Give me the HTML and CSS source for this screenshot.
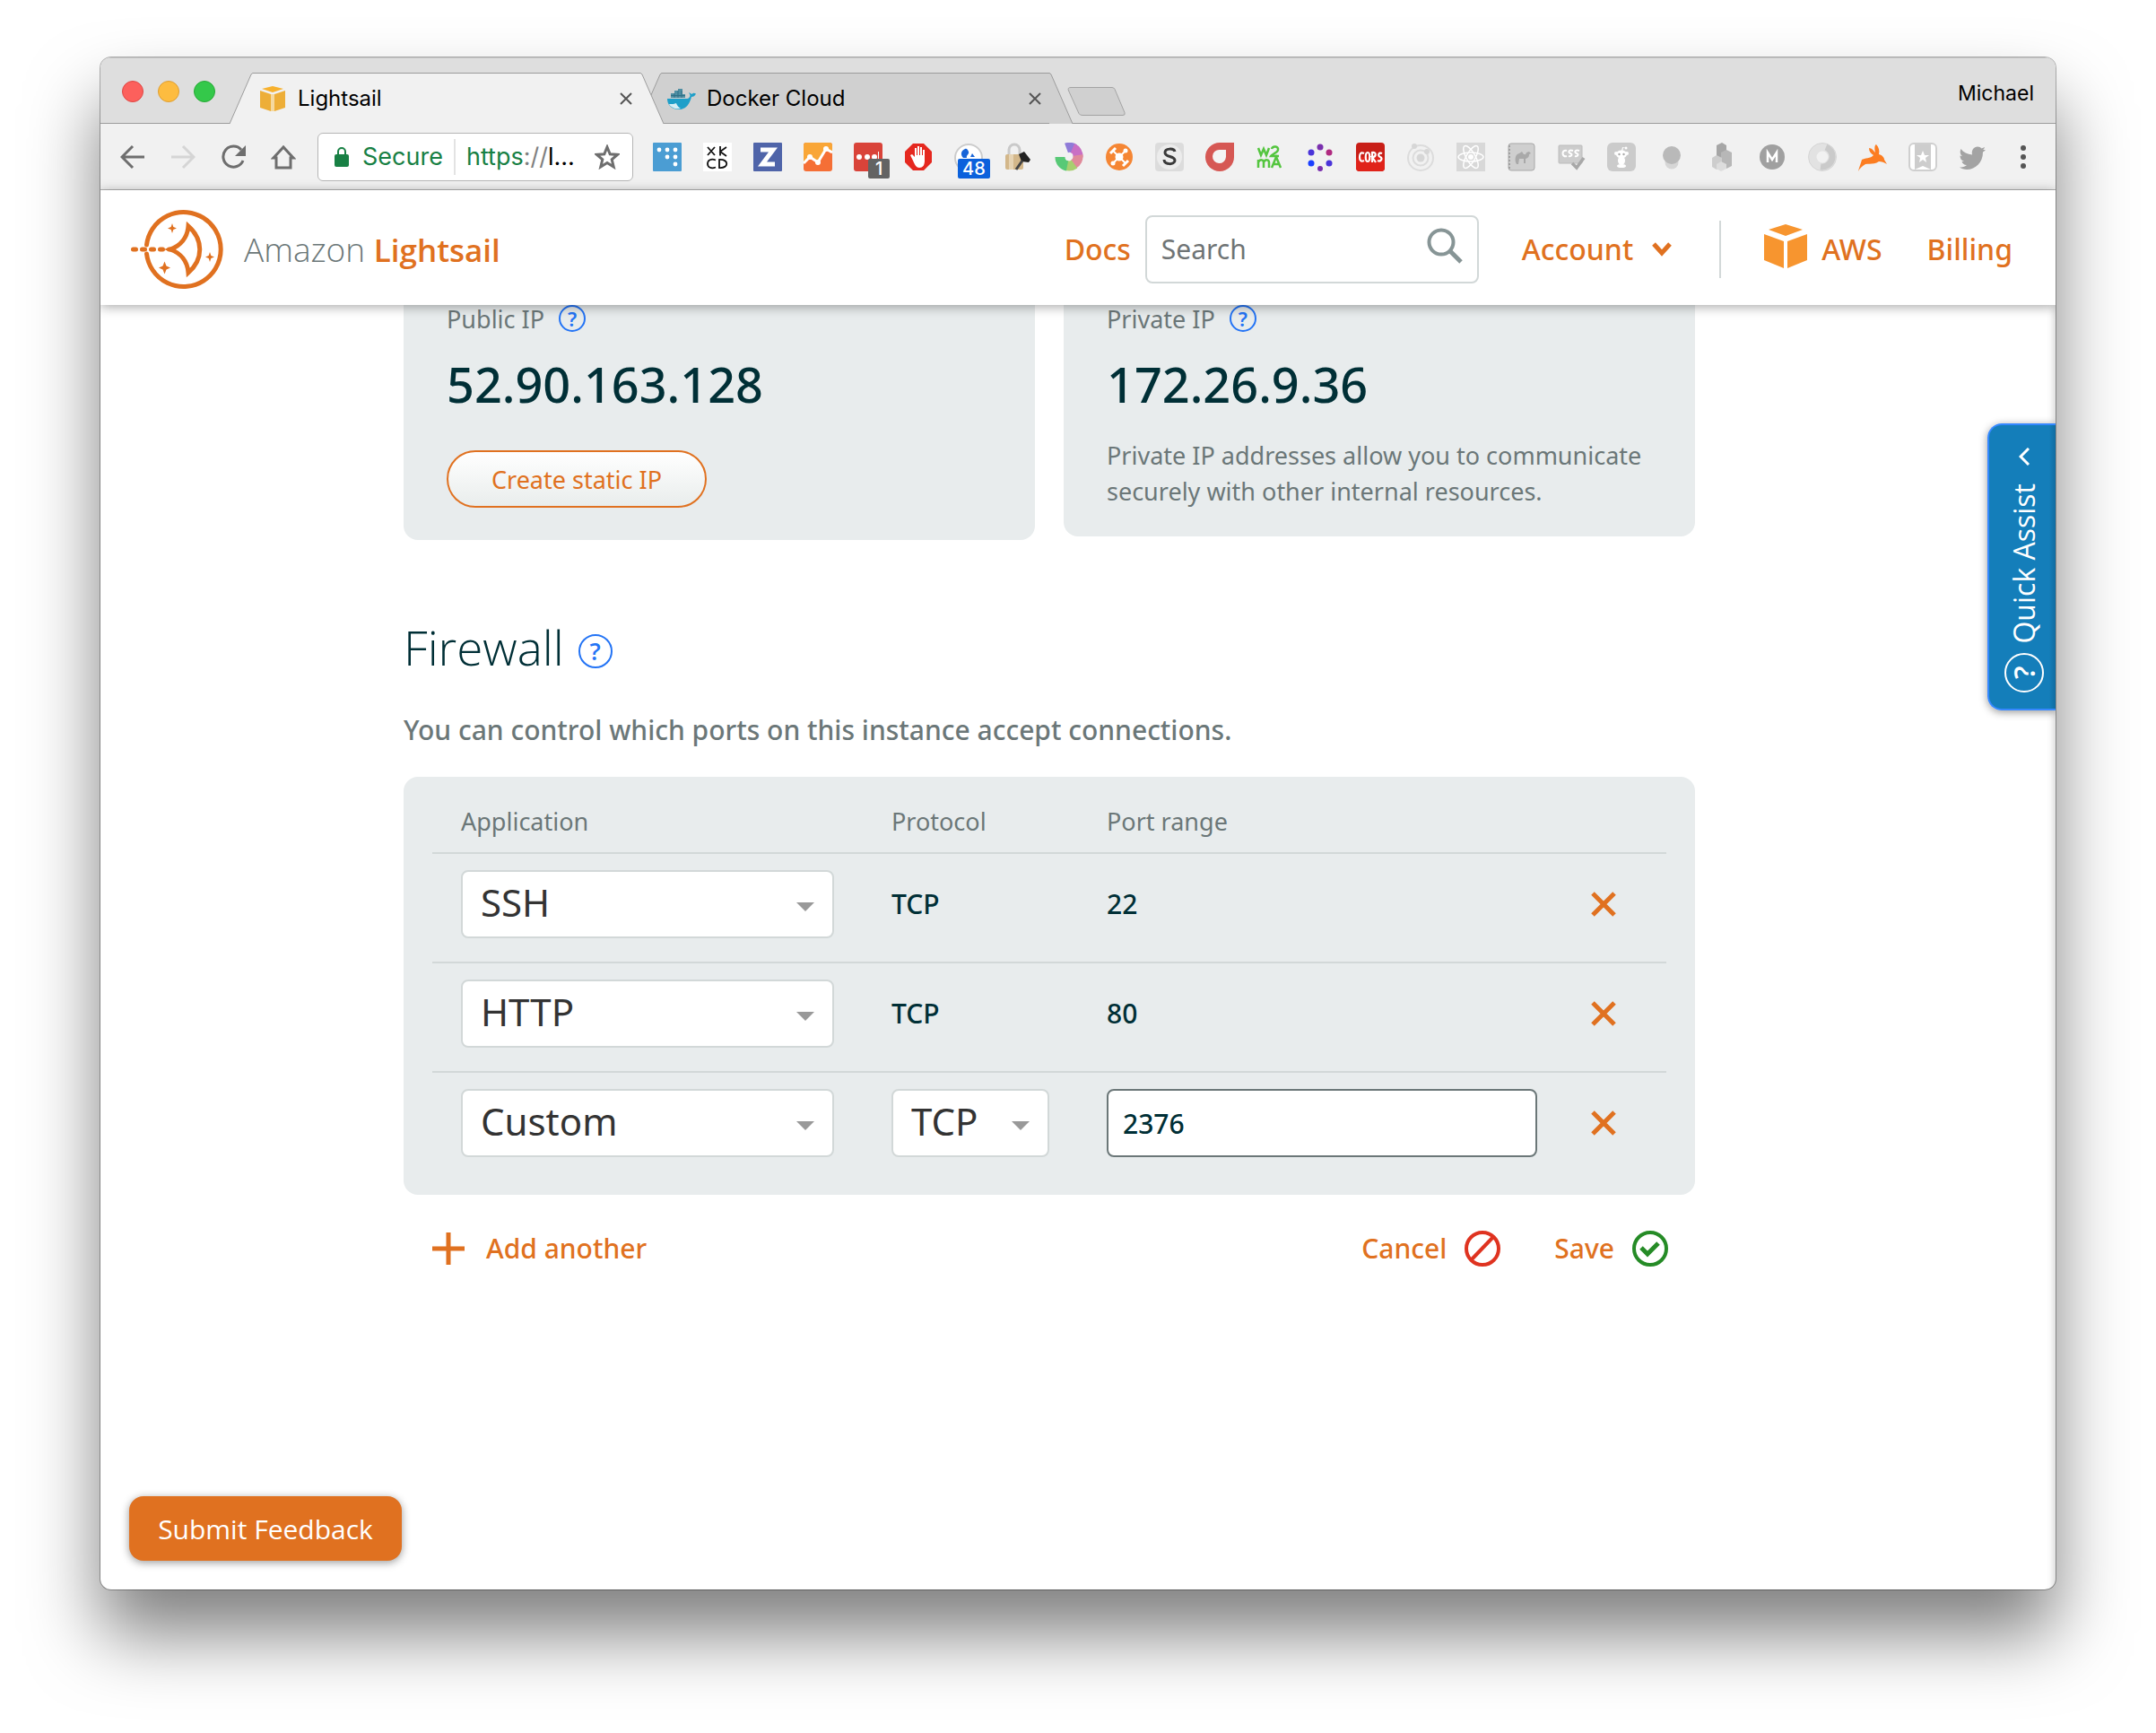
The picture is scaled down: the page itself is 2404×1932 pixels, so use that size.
FILE: index.html
```html
<!DOCTYPE html>
<html lang="en">
<head>
<meta charset="utf-8">
<meta name="viewport" content="width=device-width, initial-scale=1">
<title>Lightsail</title>
<link rel="stylesheet" href="styles.css">
</head>
<body>
<div class="window">
  <div class="tabstrip">
    <div class="lights">
      <button class="light light-close" aria-label="Close window"></button>
      <button class="light light-min" aria-label="Minimize window"></button>
      <button class="light light-max" aria-label="Zoom window"></button>
    </div>
    <div class="tab tab-active">
      <svg class="slant" viewBox="0 0 26 57"><path class="fill" d="M0 57L24 2Q25 0 26 0V57z"/><path class="edge" d="M0 57L24 2Q25 .5 26 .5"/></svg>
      <div class="tab-body">
        <svg class="favicon" viewBox="0 0 28 28"><path fill="#f7b12d" d="M2 3L14 0l12 3-12 4z"/><path fill="#edae38" d="M0 5l12 4v19L0 24zM16 9l12-4v19l-12 4z"/><path fill="#f5d9a0" d="M12 9h4v19h-4z"/></svg>
        <span class="tab-title">Lightsail</span>
        <button class="tab-close" aria-label="Close tab"><svg viewBox="0 0 14 14"><path d="M1 1l12 12M13 1L1 13"/></svg></button>
      </div>
      <svg class="slant" viewBox="0 0 26 57"><path class="fill" d="M26 57L2 2Q1 0 0 0V57z"/><path class="edge" d="M26 57L2 2Q1 .5 0 .5"/></svg>
    </div>
    <div class="tab tab-back">
      <svg class="slant" viewBox="0 0 26 57"><path class="fill" d="M0 57L24 2Q25 0 26 0V57z"/><path class="edge" d="M0 57L24 2Q25 .5 26 .5"/></svg>
      <div class="tab-body">
        <svg class="favicon favicon-wide" viewBox="0 0 32 24"><path fill="#4f8fa3" d="M4 11V6h4V3h4V1h5v6h3v4z"/><path stroke="#2f6f86" d="M8 6v5M12 3v8M16 3v8M4 8.500h16"/><path fill="#1f9fc9" d="M0 12h22c2 0 3.500-2 3.500-4L24 5l3.500 2c1-1.500 2.500-1.500 4.500-.5-1 2.500-3 3.500-5 3.500-2 8-6 14-14 14C4 24 0 18 0 12z"/><path fill="#d8eef5" d="M2 18c4 0 6 0 8-1 1 3 3 5 5 6-6 1-11-1-13-5z"/></svg>
        <span class="tab-title">Docker Cloud</span>
        <button class="tab-close" aria-label="Close tab"><svg viewBox="0 0 14 14"><path d="M1 1l12 12M13 1L1 13"/></svg></button>
      </div>
      <svg class="slant" viewBox="0 0 26 57"><path class="fill" d="M26 57L2 2Q1 0 0 0V57z"/><path class="edge" d="M26 57L2 2Q1 .5 0 .5"/></svg>
    </div>
    <button class="newtab" aria-label="New tab"><svg viewBox="0 0 66 32"><path d="M4 .5h46q2 0 3 2l11 26q1 3-2 3H17q-3 0-4-2L1.500 4Q0 .5 4 .5z"/></svg></button>
    <span class="profile">Michael</span>
  </div>

  <div class="toolbar">
    <div class="nav-buttons">
      <button aria-label="Back"><svg class="line" viewBox="0 0 28 28"><path d="M27 14H3M14 2L2 14l12 12"/></svg></button>
      <button aria-label="Forward"><svg class="line faint" viewBox="0 0 28 28"><path d="M1 14h24M14 2l12 12-12 12"/></svg></button>
      <button aria-label="Reload"><svg class="line" viewBox="0 0 28 28"><path d="M25 18a11.500 11.500 0 1 1-2-12"/><path fill="#6e6e6e" stroke="none" d="M28 1v12H16z"/></svg></button>
      <button aria-label="Home"><svg class="line" viewBox="0 0 28 28"><path d="M14 3L3 15h3v11h16V15h3z"/></svg></button>
    </div>
    <div class="address">
      <svg class="lock" viewBox="0 0 16 22"><rect y="8" width="16" height="14" rx="2" fill="#188044"/><path d="M4 9V5a4 4 0 0 1 8 0v4" fill="none" stroke="#188044" stroke-width="2"/></svg>
      <span class="secure">Secure</span>
      <span class="url"><span class="scheme">https</span><span class="slashes">://</span>l...</span>
      <button aria-label="Bookmark"><svg class="line star" viewBox="0 0 28 28"><path d="M14 3l3.200 7.800 8.300.6-6.300 5.400 2 8.200-7.200-4.500L6.800 25l2-8.200-6.300-5.400 8.300-.6z"/></svg></button>
    </div>
    <div class="extensions">
      <svg viewBox="0 0 32 32"><rect width="32" height="32" rx="1" fill="#4b9dd3"/><g fill="#fff"><circle cx="7" cy="8" r="2.400"/><circle cx="16" cy="8" r="2.400"/><circle cx="25" cy="8" r="2.400"/><circle cx="16" cy="16" r="2.400"/><circle cx="25" cy="16" r="2.400"/><circle cx="25" cy="24" r="2.400"/></g></svg>
      <svg viewBox="0 0 32 32"><rect width="32" height="32" fill="#fff"/><path fill="none" stroke="#111" stroke-width="1.800" d="M5 5l8 9M13 5l-8 9M19 4v10.500M26 5l-7 5 7 5M14 19.500c-5-2-9 0-9 4s4 6 9 4M18 19v9c11 1 11-10 0-9z"/></svg>
      <svg viewBox="0 0 32 32"><rect width="32" height="32" rx="1" fill="#4f64a9"/><path fill="none" stroke="#fff" stroke-width="5" d="M8 8h14L10 24h14"/></svg>
      <svg viewBox="0 0 32 32"><rect width="32" height="32" rx="3" fill="#f56f36"/><path fill="#f9a637" d="M0 23V3q0-3 3-3h26q3 0 3 3v8l-6-4-10 16-9-7z"/><path fill="none" stroke="#fff" stroke-width="3" d="M0 23l7-7 9 6 9-15 7 4"/><g fill="#fff"><circle cx="7" cy="16" r="3"/><circle cx="16" cy="22" r="3"/><circle cx="25" cy="7" r="3"/></g></svg>
      <span class="ext-badged"><svg viewBox="0 0 32 32"><rect width="32" height="32" rx="3" fill="#d94339"/><g fill="#fff"><circle cx="6" cy="16" r="3"/><circle cx="15" cy="16" r="3"/><circle cx="23" cy="16" r="3"/><path d="M27 10h1v8h-1z"/></g></svg><b class="badge badge-grey">1</b></span>
      <svg viewBox="0 0 32 32"><path fill="#e5281f" d="M10 1h12l9 9v12l-9 9H10l-9-9V10z"/><path fill="#fff" d="M10 20l-3-6 2-1 3 3V6h2v8h1V4h2v10h1V5h2v9h1V8h2v12c0 5-2 8-6 8-3 0-5-3-7-8z"/></svg>
      <span class="ext-badged"><svg viewBox="0 0 32 32"><circle cx="16" cy="17" r="15" fill="#fff" stroke="#ccc" stroke-width="2"/><path fill="#1764d8" d="M12 7c-5 2-5 7-2 10h4c-1-3 3-4 2-7-1-2-2-4-4-3zM20 12l3 4h-5z"/></svg><b class="badge badge-blue">48</b></span>
      <svg viewBox="0 0 32 32"><path d="M5 14V8a6 6 0 0 1 12 0v6" fill="none" stroke="#c9c9c9" stroke-width="3"/><rect x="1" y="13" width="20" height="17" rx="2" fill="#d3b78a"/><path fill="#e6d3b3" d="M5 13h5v17H5z"/><path fill="#222" d="M16 13l6-3 7 9-2 3-8-1z"/><path stroke="#444" stroke-width="3" d="M20 20L13 30"/></svg>
      <svg viewBox="0 0 32 32"><g fill="none" stroke-width="11"><path stroke="#8f7bd8" d="M13 6a10 10 0 0 1 9 1"/><path stroke="#c96fc4" d="M20 6a10 10 0 0 1 6 10"/><path stroke="#e08a9a" d="M26 14a10 10 0 0 1-5 10"/><path stroke="#a8cf6f" d="M22 24a10 10 0 0 1-10 1"/><path stroke="#58c976" d="M14 26a10 10 0 0 1-8-10"/></g></svg>
      <svg viewBox="0 0 32 32"><circle cx="16" cy="16" r="15" fill="#f58634"/><g stroke="#fff" stroke-width="3" fill="#fff"><circle cx="16" cy="16" r="3"/><path d="M9 9l14 14M23 9L9 23" stroke-width="2"/><path d="M6 12l6-6M20 26l6-6"/></g><g fill="#fff"><circle cx="23" cy="9" r="2.500"/><circle cx="9" cy="23" r="2.500"/></g></svg>
      <svg viewBox="0 0 32 32"><rect width="32" height="32" rx="4" fill="#dcdcdc"/><circle cx="16" cy="16" r="14" fill="#ececec"/><path fill="none" stroke="#3a3a3a" stroke-width="3" d="M22 10c-1-4-11-4-11 1 0 6 11 3 11 9 0 5-12 5-12-1"/></svg>
      <svg viewBox="0 0 32 32"><path fill="#d65854" d="M32 0v16a16 16 0 1 1-16-16z"/><path fill="#f4f4f4" d="M23 8v8a7.500 7.500 0 1 1-7-8z"/></svg>
      <svg viewBox="0 0 32 32"><path fill="none" stroke="#54c53f" stroke-width="2.500" d="M3 6l3 8 3-7 3 7 3-8M18 7c1-4 8-3 7 1 0 3-7 5-8 7h9M3 28v-9M3 22c2-4 6-3 6 0v6M9 22c2-4 6-3 6 0v6M18 28l5-12 5 12M20 24h7"/></svg>
      <svg viewBox="0 0 32 32"><g fill="#4a34d9"><circle cx="6" cy="11" r="3.500"/><circle cx="26" cy="23" r="3.500"/></g><g fill="#7a2fae"><circle cx="16" cy="5" r="3.500"/><circle cx="16" cy="29" r="3"/></g><circle cx="26" cy="11" r="3.500" fill="#b02a80"/><circle cx="6" cy="23" r="3.500" fill="#1a3fff"/></svg>
      <svg viewBox="0 0 32 32"><rect width="32" height="32" rx="4" fill="#c81e17"/><rect y="16" width="32" height="16" rx="4" fill="#e0231a"/><path fill="none" stroke="#fff" stroke-width="2.200" d="M9 12c-4-2-5 1-5 4s1 6 5 4M13 11c-3 0-3 10 0 10s3-10 0-10zM18 22V11c5-1 5 5 0 5l4 6M29 12c-4-2-5 3-2 4s1 6-3 4"/></svg>
      <svg viewBox="0 0 32 32"><g fill="none" stroke="#dcdcdc" stroke-width="2"><circle cx="16" cy="17" r="14"/><circle cx="16" cy="17" r="8.500"/></g><g fill="#d6d6d6"><circle cx="16" cy="17" r="4.500"/><circle cx="9" cy="4" r="3"/><circle cx="23" cy="10" r="3"/></g></svg>
      <svg viewBox="0 0 32 32"><rect width="32" height="32" fill="#d8d8d8"/><g fill="none" stroke="#fff" stroke-width="1.500"><ellipse cx="16" cy="16" rx="14" ry="5"/><ellipse cx="16" cy="16" rx="14" ry="5" transform="rotate(60 16 16)"/><ellipse cx="16" cy="16" rx="14" ry="5" transform="rotate(120 16 16)"/></g><circle cx="16" cy="16" r="3" fill="#fff"/></svg>
      <svg viewBox="0 0 32 32"><rect x="2" y="1" width="29" height="30" rx="3" fill="#cfcfcf" stroke="#a8a8a8"/><path stroke="#a0a0a0" stroke-width="2" stroke-dasharray="2 2" d="M3 3v26"/><path fill="#a9a9a9" d="M10 22c-1-5 0-9 4-10l3-2 2 3c2 0 2 1 3-2l3-1 2 2-2 1c0 3-1 4-4 5v5h-2v-5h-5l-1 6h-2z"/></svg>
      <svg viewBox="0 0 32 32"><rect x="2" y="3" width="26" height="20" rx="1" fill="#ccc" stroke="#bcbcbc"/><path fill="none" stroke="#fff" stroke-width="2" d="M11 9c-6-2-6 8 0 6M18 9c-5-2-6 2-3 3s1 4-2 3M25 9c-5-2-6 2-3 3s1 4-2 3"/><path fill="none" stroke="#a8a8a8" stroke-width="3.500" d="M17 23l5 5 8-11"/></svg>
      <svg viewBox="0 0 32 32"><rect width="32" height="32" rx="6" fill="#cbcbcb"/><g fill="#fff"><ellipse cx="16" cy="13" rx="6" ry="4.500"/><circle cx="10" cy="12" r="2"/><circle cx="22" cy="12" r="2"/><ellipse cx="16" cy="20" rx="4" ry="5"/><ellipse cx="16" cy="26" rx="5" ry="2"/><circle cx="21" cy="6" r="1.500"/><path d="M16 9l1-4 4 1-3 0-1 4z"/></g><g fill="#aaa"><circle cx="13.500" cy="13" r="1.200"/><circle cx="18.500" cy="13" r="1.200"/></g></svg>
      <svg viewBox="0 0 32 32"><circle cx="16" cy="22" r="7.500" fill="#d6d6d6"/><circle cx="16" cy="14" r="10" fill="#b9b9b9"/></svg>
      <svg viewBox="0 0 32 32"><path fill="#a6a6a6" d="M10 3l6-3 5 3v20H10z"/><path fill="#b7b7b7" d="M15 11l6-3 6 3v15l-6 3-6-3z"/><path fill="#cdcdcd" d="M5 17l5-3 6 3v10l-6 3-5-3z"/><path fill="#ddd" d="M10 24l5-3 6 3v5l-6 3-5-3z"/></svg>
      <svg viewBox="0 0 32 32"><circle cx="16" cy="16" r="14" fill="#a0a0a0"/><path fill="none" stroke="#fff" stroke-width="2.500" d="M11 22V11l5 8 5-8v11"/></svg>
      <svg viewBox="0 0 32 32"><circle cx="16" cy="16" r="11" fill="none" stroke="#e2e2e2" stroke-width="9"/><path fill="none" stroke="#cacaca" stroke-width="7" d="M20 5a11.500 11.500 0 0 1-6 22"/><circle cx="16" cy="16" r="15.500" fill="none" stroke="#d5d5d5"/></svg>
      <svg viewBox="0 0 32 32"><path fill="#fc7d21" d="M0 32c1-5 3-9 4-13 3-2 10-1 13-5-3-2-5-4-5-8 3 0 5 3 7 5-1-4-1-8 1-9 3 3 4 7 3 11 4 1 6 4 6 6l3 5c-3-2-6-3-9-3-5 4-11 2-15 3-3 2-6 4-8 8z"/></svg>
      <svg viewBox="0 0 32 32"><rect x="1" y="1" width="30" height="30" rx="5" fill="#fff" stroke="#cfcfcf" stroke-width="2"/><path fill="#cdcdcd" d="M7 2h18v28l-9-4-9 4z"/><path fill="#fff" d="M16 9l2 5h5l-4 3 1 5-4-3-4 3 1-5-4-3h5z"/></svg>
      <svg viewBox="0 0 32 32"><path fill="#a3a3a3" d="M30 8c-1 1-2 2-3 2.500C27 22 19 30 9 30c-3 0-6-1-8-2.500 3 0 6-.5 8-2.500-3 0-5-2-5.500-4h2.500C3 20 1.500 18 1.500 14.500l2.500.8C1.500 13 1 10 2.500 7c3 4 7 6 12.500 6.500C14 8 17 4.500 21 4.500c2 0 3.500.7 4.500 2L29 5c-.5 1.500-1 2.500-2 3z"/></svg>
      <button aria-label="Menu"><svg viewBox="0 0 32 32"><g fill="#555"><circle cx="16" cy="6" r="3"/><circle cx="16" cy="16" r="3"/><circle cx="16" cy="26" r="3"/></g></svg></button>
    </div>
  </div>

  <div class="page">
    <header class="site-header">
      <a class="brand" href="#">
        <svg class="brand-mark" viewBox="0 0 104 92"><g fill="none" stroke="#e07120" stroke-width="5"><path d="M17.500 41a41.500 41.500 0 1 1 0 10" stroke-linecap="round"/><path d="M44 46C55 42 63 33 64 20c17 15 17 37 0 52-1-13-9-22-20-26z"/><path stroke-linecap="round" stroke-dasharray="3 7" d="M2.500 46H44"/></g><g fill="#e07120"><path d="M46 17l1.300 4 3.700 1.500-3.700 1.500L46 28l-1.300-4-3.700-1.500 3.700-1.500z"/><path d="M88 49l1.300 4 3.700 1.500-3.700 1.500L88 60l-1.300-4-3.700-1.500 3.700-1.500z"/><path d="M37.500 59.500l2 5 4.500 2-4.500 2-2 5-2-5-4.500-2 4.500-2z"/></g></svg>
        <span class="brand-name">Amazon <strong>Lightsail</strong></span>
      </a>
      <nav class="site-nav">
        <a class="nav-docs" href="#">Docs</a>
        <label class="search">
          <input type="search" placeholder="Search" aria-label="Search">
          <svg viewBox="0 0 40 40"><circle cx="16" cy="16" r="13.500" fill="none" stroke="#879596" stroke-width="4"/><path d="M26 26l12 12" stroke="#879596" stroke-width="5"/></svg>
        </label>
        <button class="nav-account">Account <svg viewBox="0 0 24 16"><path d="M3 2l9 10 9-10" fill="none" stroke="#e07120" stroke-width="5"/></svg></button>
        <span class="nav-divider"></span>
        <a class="nav-aws" href="#"><svg viewBox="0 0 48 50"><path fill="#f7952f" d="M5 6l19-6 19 6-19 7zM0 11l22 8v30L0 40zM26 19l22-8v29l-22 9z"/></svg>AWS</a>
        <a class="nav-billing" href="#">Billing</a>
      </nav>
    </header>

    <main class="content">
      <div class="cards">
        <section class="card card-public">
          <h2 class="card-label">Public IP <button class="help" aria-label="About public IP">?</button></h2>
          <p class="ip">52.90.163.128</p>
          <button class="btn-outline">Create static IP</button>
        </section>
        <section class="card card-private">
          <h2 class="card-label">Private IP <button class="help" aria-label="About private IP">?</button></h2>
          <p class="ip">172.26.9.36</p>
          <p class="card-note">Private IP addresses allow you to communicate securely with other internal resources.</p>
        </section>
      </div>

      <h1 class="section-title">Firewall <button class="help help-large" aria-label="About the firewall">?</button></h1>
      <p class="intro">You can control which ports on this instance accept connections.</p>

      <div class="panel">
        <table class="rules">
          <colgroup><col class="col-app"><col class="col-proto"><col class="col-port"><col></colgroup>
          <thead>
            <tr><th scope="col">Application</th><th scope="col">Protocol</th><th scope="col">Port range</th><td></td></tr>
          </thead>
          <tbody>
            <tr>
              <td><span class="select"><select aria-label="Application, rule 1"><option>SSH</option></select></span></td>
              <td>TCP</td><td>22</td>
              <td><button class="remove" aria-label="Remove rule 1"><svg viewBox="0 0 28 28"><path d="M2 2l24 24M26 2L2 26"/></svg></button></td>
            </tr>
            <tr>
              <td><span class="select"><select aria-label="Application, rule 2"><option>HTTP</option></select></span></td>
              <td>TCP</td><td>80</td>
              <td><button class="remove" aria-label="Remove rule 2"><svg viewBox="0 0 28 28"><path d="M2 2l24 24M26 2L2 26"/></svg></button></td>
            </tr>
            <tr>
              <td><span class="select"><select aria-label="Application, rule 3"><option>Custom</option></select></span></td>
              <td><span class="select"><select aria-label="Protocol, rule 3"><option>TCP</option></select></span></td>
              <td><input class="port" type="text" value="2376" aria-label="Port range, rule 3"></td>
              <td><button class="remove" aria-label="Remove rule 3"><svg viewBox="0 0 28 28"><path d="M2 2l24 24M26 2L2 26"/></svg></button></td>
            </tr>
          </tbody>
        </table>
      </div>

      <div class="actions">
        <button class="action action-add"><svg viewBox="0 0 36 36"><path d="M18 0v36M0 18h36" stroke="#e07120" stroke-width="5"/></svg>Add another</button>
        <button class="action action-cancel">Cancel<svg viewBox="0 0 40 40"><g fill="none" stroke="#df3320" stroke-width="4"><circle cx="20" cy="20" r="18"/><path d="M32 7L8 32"/></g></svg></button>
        <button class="action action-save">Save<svg viewBox="0 0 40 40"><g fill="none" stroke="#258b26"><circle cx="20" cy="20" r="18" stroke-width="4"/><path d="M10 19l7 7 12-12" stroke-width="5"/></g></svg></button>
      </div>
    </main>

    <button class="assist">
      <svg class="assist-arrow" viewBox="0 0 12 20"><path d="M11 1L2 10l9 9"/></svg>
      <span class="assist-text">Quick Assist</span>
      <span class="assist-help">?</span>
    </button>
    <button class="feedback">Submit Feedback</button>
  </div>
</div>
</body>
</html>
```
FILE: styles.css
```css
:root {
  --orange: #e07120;
  --ink: #002f36;
  --muted: #6b7778;
  --panel: #e8eced;
  --rule: #d2d8d8;
  --ui: Inter, "Liberation Sans", sans-serif;
  --text: "Noto Sans", "Open Sans", sans-serif;
  --light: "Open Sans", "Noto Sans", sans-serif;
}

* { box-sizing: border-box; }

body {
  margin: 0;
  padding: 64px 112px 160px;
  min-height: 100vh;
  display: flex;
  background: #fff;
  font-family: var(--text);
  color: var(--ink);
}

h1, h2, p { margin: 0; font-weight: 400; }
button { margin: 0; padding: 0; border: 0; background: none; font: inherit; color: inherit; cursor: pointer; }
a { color: var(--orange); text-decoration: none; }
svg { display: block; flex: none; }

.window {
  flex: 1;
  min-width: 0;
  display: flex;
  flex-direction: column;
  border-radius: 12px;
  overflow: hidden;
  background: #fff;
  box-shadow: 0 0 0 1px rgba(0, 0, 0, .3), 0 50px 80px rgba(0, 0, 0, .5);
}

/* Tab strip */
.tabstrip {
  display: flex;
  height: 74px;
  padding: 0 24px;
  background: #dedede;
  box-shadow: inset 0 -1px #9c9c9c, inset 0 1px #c4c4c4;
  font: 24px/28px var(--ui);
  color: #000;
}
.lights { display: flex; align-items: center; gap: 16px; margin-right: 16px; padding-top: 2px; }
.light { width: 24px; height: 24px; border-radius: 50%; }
.light-close { background: #fc605c; border: 1px solid #df4744; }
.light-min { background: #fdbc40; border: 1px solid #de9f34; }
.light-max { background: #34c84a; border: 1px solid #27aa35; }

.tab { display: flex; flex: 0 1 484px; height: 57px; margin-top: 17px; min-width: 0; }
.slant { width: 26px; height: 57px; }
.slant .fill { fill: var(--tab); }
.slant .edge { fill: none; stroke: #9c9c9c; }
.tab-body {
  flex: 1;
  min-width: 0;
  display: flex;
  align-items: center;
  gap: 14px;
  padding: 0 9px 0 8px;
  background: var(--tab);
  border-top: 1px solid #9c9c9c;
}
.tab-active { --tab: #f1f1f1; position: relative; z-index: 1; }
.tab-back { --tab: #d0d0d0; margin-left: -28px; box-shadow: inset 0 -1px #9c9c9c; }
.tab-back .tab-body { border-bottom: 1px solid #9c9c9c; padding-left: 6px; gap: 12px; }
.favicon { width: 28px; height: 28px; }
.favicon-wide { width: 32px; height: 24px; }
.tab-title { flex: 1; white-space: nowrap; overflow: hidden; }
.tab-close svg { width: 14px; height: 14px; fill: none; stroke: #555; stroke-width: 2; }
.newtab { align-self: flex-start; height: 32px; margin: 33px 0 0 -6px; }
.newtab svg { width: 66px; height: 32px; fill: #d0d0d0; stroke: #a3a3a3; }
.profile { margin: 26px 0 0 auto; font-size: 23px; }

/* Toolbar */
.toolbar {
  display: flex;
  align-items: center;
  height: 74px;
  padding: 0 20px 0 22px;
  background: #f1f1f1;
  border-bottom: 1px solid #b3b3b3;
}
.nav-buttons { display: flex; gap: 28px; margin-right: 24px; }
.nav-buttons svg { width: 28px; height: 28px; }
.line { fill: none; stroke: #6e6e6e; stroke-width: 3; }
.faint { stroke: #d5d5d5; }
.address {
  flex: 1;
  min-width: 0;
  height: 54px;
  display: flex;
  align-items: center;
  padding: 0 14px 0 18px;
  background: #fff;
  border: 1px solid #b6b6b6;
  border-radius: 6px;
  font: 27px/40px var(--ui);
}
.lock { width: 16px; height: 22px; margin-right: 15px; }
.secure { color: #188044; padding-right: 12px; border-right: 2px solid #e3e3e3; }
.url { flex: 1; padding-left: 12px; color: #000; }
.scheme { color: #188044; }
.slashes { color: #808080; }
.star { width: 28px; height: 28px; }

.extensions { display: flex; gap: 24px; margin-left: 22px; }
.extensions svg { width: 32px; height: 32px; }
.ext-badged { position: relative; }
.badge {
  position: absolute;
  left: 16px;
  top: 18px;
  padding: 0 6px;
  border-radius: 2px;
  color: #fff;
  font: 500 20px/22px var(--ui);
}
.badge-grey { background: #636363; padding: 0 8px; }
.badge-blue { background: #0b61dc; left: 4px; padding: 0 5px; }

/* Lightsail page */
.page { flex: 1; display: flex; flex-direction: column; position: relative; box-shadow: inset -8px 0 8px -6px rgba(0, 0, 0, .18); }
.site-header {
  position: relative;
  z-index: 1;
  display: flex;
  align-items: center;
  justify-content: space-between;
  height: 128px;
  padding: 4px 48px 0 34px;
  background: #fff;
  box-shadow: 0 2px 12px rgba(0, 0, 0, .35);
  font-size: 32px;
  line-height: 48px;
}
.brand { display: flex; align-items: center; gap: 22px; color: var(--muted); font-family: var(--light); font-size: 37px; font-weight: 300; }
.brand-mark { width: 104px; height: 92px; }
.brand-name { white-space: nowrap; }
.brand strong { color: var(--orange); font-size: 35px; font-weight: 600; }
.site-nav { display: flex; align-items: center; font-weight: 500; color: var(--orange); }
.search {
  display: flex;
  align-items: center;
  width: 372px;
  height: 76px;
  margin: 0 48px 0 16px;
  padding: 0 16px;
  border: 2px solid var(--rule);
  border-radius: 8px;
}
.search input {
  flex: 1;
  min-width: 0;
  padding: 0;
  border: 0;
  outline: 0;
  background: none;
  font: 400 30px/40px var(--text);
}
.search input::placeholder { color: #6f7475; opacity: 1; }
.search svg { width: 40px; height: 40px; margin-bottom: 8px; }
.nav-account { display: flex; align-items: center; gap: 20px; }
.nav-account svg { width: 24px; height: 16px; }
.nav-divider { width: 2px; height: 64px; margin: 0 48px 0 52px; background: var(--rule); }
.nav-aws { display: flex; align-items: center; gap: 16px; margin-right: 50px; }
.nav-aws svg { width: 48px; height: 50px; margin-bottom: 6px; }

.content { width: 100%; max-width: 1504px; margin: 0 auto; padding-right: 64px; }

.cards { display: grid; grid-template-columns: 1fr 1fr; gap: 32px; align-items: start; }
.card { padding: 0 48px; background: var(--panel); border-radius: 0 0 16px 16px; }
.card-public { padding-bottom: 36px; }
.card-private { padding-bottom: 30px; }
.card-label { display: flex; gap: 16px; color: var(--muted); font-size: 27px; line-height: 32px; }
.help {
  width: 30px;
  height: 30px;
  border: 2px solid #2474f5;
  border-radius: 50%;
  color: #2474f5;
  font-size: 22px;
  font-weight: 600;
  line-height: 26px;
}
.ip { margin-top: 20px; font-size: 54px; font-weight: 500; line-height: 72px; }
.btn-outline {
  width: 290px;
  height: 64px;
  margin-top: 38px;
  border: 2px solid var(--orange);
  border-radius: 32px;
  background: linear-gradient(#fff, #e9edec);
  color: var(--orange);
  font-size: 27px;
}
.card-note { margin-top: 24px; color: var(--muted); font-size: 27px; line-height: 40px; }

.section-title {
  display: flex;
  align-items: center;
  gap: 16px;
  margin-top: 84px;
  font-family: var(--light);
  font-size: 53px;
  font-weight: 300;
  line-height: 72px;
}
.help-large { width: 38px; height: 38px; margin-top: 8px; font-size: 27px; line-height: 34px; }
.intro { margin-top: 36px; color: var(--muted); font-size: 30px; font-weight: 500; line-height: 40px; }

.panel { margin-top: 32px; padding: 0 32px 16px; background: var(--panel); border-radius: 16px; }
.rules { width: 100%; table-layout: fixed; border-collapse: separate; border-spacing: 0; font-size: 30px; line-height: 40px; }
.col-app { width: 480px; }
.col-proto { width: 240px; }
.col-port { width: 544px; }
.rules th { padding: 32px 32px 16px; color: var(--muted); font-size: 27px; font-weight: 400; line-height: 36px; text-align: left; }
.rules tbody td { height: 122px; padding: 18px 32px 26px; border-top: 2px solid var(--rule); font-weight: 500; }
.rules tbody td:last-child { padding-left: 28px; padding-right: 0; }
.select { display: block; position: relative; }
.select::after {
  content: "";
  position: absolute;
  right: 22px;
  top: 36px;
  border: 10px solid transparent;
  border-top-color: #999;
  border-bottom: 0;
  pointer-events: none;
}
.select select {
  display: block;
  width: 100%;
  height: 76px;
  padding: 0 20px 4px;
  border: 2px solid var(--rule);
  border-radius: 8px;
  background: #fff;
  color: #333;
  font: 42px/64px var(--text);
  appearance: none;
}
.port {
  display: block;
  width: 100%;
  height: 76px;
  padding: 0 16px;
  border: 2px solid var(--muted);
  border-radius: 8px;
  background: #fff;
  color: var(--ink);
  font: 500 30px/40px var(--text);
}
.remove { display: block; }
.remove svg { width: 28px; height: 28px; fill: none; stroke: var(--orange); stroke-width: 5; }

.actions { display: flex; align-items: center; margin-top: 40px; padding: 0 30px 0 32px; }
.action { display: flex; align-items: center; gap: 20px; color: var(--orange); font-size: 30px; font-weight: 500; line-height: 40px; }
.action svg { width: 40px; height: 40px; }
.action-add { gap: 24px; margin-right: auto; }
.action-add svg { width: 36px; height: 36px; }
.action-cancel { margin-right: 60px; }

.assist {
  position: absolute;
  right: 0;
  top: 260px;
  width: 76px;
  height: 320px;
  display: flex;
  flex-direction: column;
  align-items: center;
  justify-content: flex-end;
  padding: 0 0 18px 4px;
  border: 2px solid #3588ff;
  border-right: 0;
  border-radius: 16px 0 0 16px;
  background: linear-gradient(to right, #147eba 90%, #0f6ca1);
  box-shadow: 0 2px 10px rgba(0, 0, 0, .4);
  color: #fff;
  font-family: var(--light);
  font-size: 32px;
}
.assist-arrow { width: 12px; height: 20px; margin-bottom: 20px; fill: none; stroke: #fff; stroke-width: 3; }
.assist-text { writing-mode: vertical-rl; transform: rotate(180deg); line-height: 40px; margin-bottom: 10px; }
.assist-help {
  width: 44px;
  height: 44px;
  border: 2px solid #fff;
  border-radius: 50%;
  writing-mode: vertical-rl;
  transform: rotate(180deg);
  font-weight: 600;
  line-height: 40px;
  text-align: center;
}
.feedback {
  position: absolute;
  left: 32px;
  bottom: 32px;
  width: 304px;
  height: 72px;
  border-radius: 16px;
  background: var(--orange);
  box-shadow: 0 2px 10px rgba(0, 0, 0, .4);
  color: #fff;
  font-family: var(--light);
  font-size: 30px;
}
```
